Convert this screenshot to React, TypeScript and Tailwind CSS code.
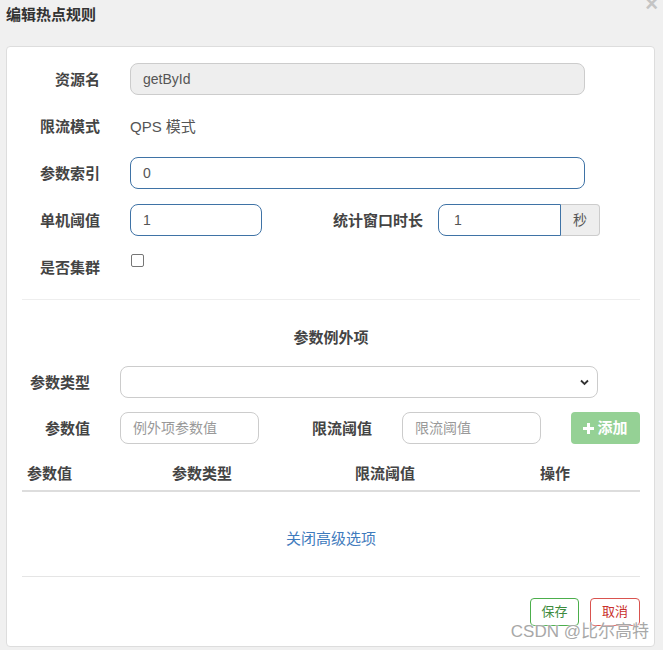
import React from "react";

const font = { fontFamily: '"Liberation Sans", "Noto Sans CJK SC", sans-serif' };

function Label({ w, children }: { w: string; children: React.ReactNode }) {
  return (
    <div className={`${w} shrink-0 text-right pt-[7px] leading-[20px] text-[15px] font-bold text-[#444]`}>
      {children}
    </div>
  );
}

export default function App() {
  return (
    <div className="relative min-h-[650px] bg-[#f0f0f0] text-[#333]" style={font}>
      <div className="flex justify-between h-[46px] pl-[6px] pr-[5px]">
        <div className="pt-[5px] leading-[20px] text-[15px] font-bold text-[#333]">编辑热点规则</div>
        <div className="-mt-[7px] text-[22px] font-bold leading-[22px] text-[#c4c4c4]">×</div>
      </div>
      <div className="ml-[6px] mr-[8px] bg-white border border-[#ddd] rounded-[4px] pt-[16px] pl-[15px] pr-[14px] pb-[20px]">
        {/* Section 1 */}
        <div className="flex items-start h-[32px]">
          <Label w="w-[78px]">资源名</Label>
          <div className="ml-[30px] w-[455px] h-[32px] rounded-[8px] border border-[#ccc] bg-[#eee] pl-[12px] text-[14px] leading-[30px] text-[#555]">
            getById
          </div>
        </div>
        <div className="flex items-start h-[32px] mt-[15px]">
          <Label w="w-[78px]">限流模式</Label>
          <div className="ml-[30px] pt-[7px] leading-[20px] text-[15px] text-[#555]">QPS 模式</div>
        </div>
        <div className="flex items-start h-[32px] mt-[15px]">
          <Label w="w-[78px]">参数索引</Label>
          <div className="ml-[30px] w-[455px] h-[32px] rounded-[8px] border border-[#3f73a6] bg-white pl-[12px] text-[14px] leading-[30px] text-[#555]">
            0
          </div>
        </div>
        <div className="flex items-start h-[32px] mt-[15px]">
          <Label w="w-[78px]">单机阈值</Label>
          <div className="ml-[30px] w-[132px] h-[32px] rounded-[8px] border border-[#3f73a6] bg-white pl-[12px] text-[14px] leading-[30px] text-[#555]">
            1
          </div>
          <Label w="w-[161px]">统计窗口时长</Label>
          <div className="ml-[15px] flex h-[32px]">
            <div className="w-[123px] h-[32px] rounded-l-[8px] border border-[#3f73a6] bg-white pl-[15px] text-[14px] leading-[30px] text-[#555]">
              1
            </div>
            <div className="w-[39px] h-[32px] rounded-r-[4px] border border-l-0 border-[#ccc] bg-[#eee] text-center text-[14px] leading-[30px] text-[#555]">
              秒
            </div>
          </div>
        </div>
        <div className="flex items-start h-[32px] mt-[15px]">
          <Label w="w-[78px]">是否集群</Label>
          <div className="ml-[31px] mt-[3px] w-[13px] h-[13px] rounded-[2px] border border-[#767676] bg-white" />
        </div>
        <div className="mt-[16px] border-t border-[#eee]" />

        {/* Section 2 */}
        <div className="mt-[28px] text-center leading-[20px] text-[15px] font-bold text-[#444]">参数例外项</div>
        <div className="flex items-start h-[32px] mt-[18px]">
          <Label w="w-[68px]">参数类型</Label>
          <div className="ml-[30px] relative w-[478px] h-[32px] rounded-[8px] border border-[#ccc] bg-white">
            <svg className="absolute right-[8px] top-[12px]" width="9" height="7" viewBox="0 0 9 7">
              <path d="M1 1.5 L4.5 5 L8 1.5" fill="none" stroke="#333" strokeWidth="1.8" />
            </svg>
          </div>
        </div>
        <div className="flex items-start h-[32px] mt-[14px]">
          <Label w="w-[68px]">参数值</Label>
          <div className="ml-[30px] w-[139px] h-[32px] rounded-[8px] border border-[#ccc] bg-white pl-[12px] text-[14px] leading-[30px] text-[#999]">
            例外项参数值
          </div>
          <Label w="w-[113px]">限流阈值</Label>
          <div className="ml-[30px] w-[139px] h-[32px] rounded-[8px] border border-[#ccc] bg-white pl-[12px] text-[14px] leading-[30px] text-[#999]">
            限流阈值
          </div>
          <div className="ml-[30px] w-[69px] h-[32px] rounded-[4px] bg-[#95d195] flex items-center justify-center gap-[3px] text-white text-[15px] font-bold">
            <svg width="11" height="11" viewBox="0 0 11 11">
              <rect x="4" y="0" width="3" height="11" fill="white" />
              <rect x="0" y="4" width="11" height="3" fill="white" />
            </svg>
            <span>添加</span>
          </div>
        </div>
        <div className="mt-[12px] grid grid-cols-[145px_183px_185px_1fr] border-b-2 border-[#ddd] pt-[8px] pb-[6px] leading-[20px] text-[15px] font-bold text-[#444]">
          <div className="pl-[5px]">参数值</div>
          <div className="pl-[5px]">参数类型</div>
          <div className="pl-[5px]">限流阈值</div>
          <div className="pl-[5px]">操作</div>
        </div>
        <div className="mt-[37px] text-center leading-[20px] text-[15px] text-[#3f7bbd]">关闭高级选项</div>
        <div className="mt-[27px] border-t border-[#e5e5e5]" />
        <div className="mt-[21px] flex justify-end gap-[11px]">
          <div className="w-[49px] h-[28px] rounded-[4px] border border-[#4cae4c] bg-white text-center text-[13px] leading-[26px] text-[#3d8b3d]">
            保存
          </div>
          <div className="w-[50px] h-[28px] rounded-[4px] border border-[#d9534f] bg-white text-center text-[13px] leading-[26px] text-[#c9302c]">
            取消
          </div>
        </div>
      </div>
      <div
        className="absolute right-[14px] bottom-[8px] text-[17px] leading-[20px] text-[#a8a8a8]"
        style={{ textShadow: "0 0 2px #fff, 0 0 2px #fff" }}
      >
        CSDN @比尔高特
      </div>
    </div>
  );
}
